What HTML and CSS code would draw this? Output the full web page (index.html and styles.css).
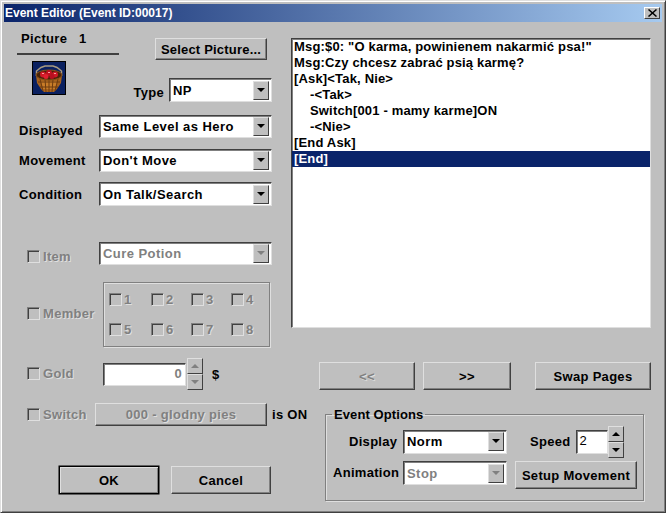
FILE: index.html
```html
<!DOCTYPE html>
<html lang="pl">
<head>
<meta charset="UTF-8" />
<title>Event Editor</title>
<link rel="stylesheet" href="styles.css">
</head>
<body>
  <div class="window">
    <div class="titlebar">
      <span>Event Editor (Event ID:00017)</span>
      <button class="close-btn">
        <svg width="9" height="8" viewBox="0 0 9 8"><path d="M0.500 0.500 8.500 7.500M8.500 0.500 0.500 7.500" stroke="#000" stroke-width="1.500" fill="none"/></svg>
      </button>
    </div>
    <div class="dialog">
      <div class="left-col">
        <div class="top-row">
          <div class="picture-block">
            <div class="picture-title">Picture&nbsp;&nbsp;&nbsp;1</div>
            <svg class="picture-icon" width="34" height="34" viewBox="0 0 34 34">
              <rect width="34" height="34" fill="#000"/>
              <rect x="1" y="1" width="32" height="32" fill="#0a2060"/>
              <path d="M4.500 15V10L9 6.500 13 5H21L25 6.500 29.500 10V15" fill="none" stroke="#a89a80" stroke-width="1.500"/>
              <path d="M4 14H30L29 22 25 28 22 31H12L9 28 5 22Z" fill="#a8621c"/>
              <path d="M9 20H25L23 28H11Z" fill="#c87c28"/>
              <path d="M8 18 11 30M13 18 14 31M17 18V31M21 18 20 31M26 18 23 30M6 21H28M8 26H26" stroke="#6e3c10" stroke-width="1" fill="none"/>
              <ellipse cx="17" cy="14" rx="13" ry="5" fill="#4a2408" stroke="#8a5218"/>
              <circle cx="11" cy="13.500" r="3" fill="#d01828"/>
              <circle cx="17" cy="12" r="3" fill="#c01020"/>
              <circle cx="23" cy="13.500" r="3" fill="#d01828"/>
              <circle cx="14" cy="15.500" r="2.500" fill="#e02030"/>
              <circle cx="20" cy="15.500" r="2.500" fill="#b81020"/>
              <path d="M10 12h2v1h-2zM16 11h2v1h-2zM22 12h2v1h-2z" fill="#f8a0a0"/>
            </svg>
          </div>
          <div class="picture-side">
            <button class="btn select-picture">Select Picture...</button>
            <div class="type-row">
              <span class="label">Type</span>
              <div class="combo combo-type"><span class="combo-text">NP</span><span class="combo-arrow"></span></div>
            </div>
          </div>
        </div>

        <div class="field field-displayed">
          <span class="label field-label">Displayed</span>
          <div class="combo"><span class="combo-text">Same Level as Hero</span><span class="combo-arrow"></span></div>
        </div>
        <div class="field field-movement">
          <span class="label field-label">Movement</span>
          <div class="combo"><span class="combo-text">Don't Move</span><span class="combo-arrow"></span></div>
        </div>
        <div class="field field-condition">
          <span class="label field-label">Condition</span>
          <div class="combo"><span class="combo-text">On Talk/Search</span><span class="combo-arrow"></span></div>
        </div>

        <div class="row-item">
          <label class="check disabled check-item"><input type="checkbox" disabled>Item</label>
          <div class="combo combo-disabled"><span class="combo-text">Cure Potion</span><span class="combo-arrow"></span></div>
        </div>

        <div class="row-member">
          <label class="check disabled check-member"><input type="checkbox" disabled>Member</label>
          <div class="member-box">
            <label class="check disabled"><input type="checkbox" disabled>1</label>
            <label class="check disabled"><input type="checkbox" disabled>2</label>
            <label class="check disabled"><input type="checkbox" disabled>3</label>
            <label class="check disabled"><input type="checkbox" disabled>4</label>
            <label class="check disabled"><input type="checkbox" disabled>5</label>
            <label class="check disabled"><input type="checkbox" disabled>6</label>
            <label class="check disabled"><input type="checkbox" disabled>7</label>
            <label class="check disabled"><input type="checkbox" disabled>8</label>
          </div>
        </div>

        <div class="row-gold">
          <label class="check disabled check-gold"><input type="checkbox" disabled>Gold</label>
          <div class="edit edit-gold disabled-text">0</div>
          <div class="spinner spinner-disabled"><span class="spin spin-up"></span><span class="spin spin-down"></span></div>
          <span class="label dollar">$</span>
        </div>

        <div class="row-switch">
          <label class="check disabled check-switch"><input type="checkbox" disabled>Switch</label>
          <button class="btn switch-btn disabled-text" disabled>000 - glodny pies</button>
          <span class="label is-on">is ON</span>
        </div>

        <div class="row-actions">
          <button class="btn btn-default action-btn">OK</button>
          <button class="btn action-btn">Cancel</button>
        </div>
      </div>

      <div class="right-col">
        <div class="listbox">
          <div class="list-line">Msg:$0: "O karma, powinienem nakarmić psa!"</div>
          <div class="list-line">Msg:Czy chcesz zabrać psią karmę?</div>
          <div class="list-line">[Ask]&lt;Tak, Nie&gt;</div>
          <div class="list-line indent">-&lt;Tak&gt;</div>
          <div class="list-line indent">Switch[001 - mamy karme]ON</div>
          <div class="list-line indent">-&lt;Nie&gt;</div>
          <div class="list-line">[End Ask]</div>
          <div class="list-line selected">[End]</div>
        </div>

        <div class="nav-row">
          <button class="btn nav-prev disabled-text" disabled>&lt;&lt;</button>
          <button class="btn nav-next">&gt;&gt;</button>
          <button class="btn nav-swap">Swap Pages</button>
        </div>

        <fieldset class="options">
          <legend>Event Options</legend>
          <div class="options-row">
            <span class="label opt-label opt-label-display">Display</span>
            <div class="combo combo-small"><span class="combo-text">Norm</span><span class="combo-arrow"></span></div>
            <span class="label speed-label">Speed</span>
            <div class="edit edit-speed">2</div>
            <div class="spinner"><span class="spin spin-up"></span><span class="spin spin-down"></span></div>
          </div>
          <div class="options-row options-row-2">
            <span class="label opt-label">Animation</span>
            <div class="combo combo-small combo-disabled"><span class="combo-text">Stop</span><span class="combo-arrow"></span></div>
            <button class="btn setup-btn">Setup Movement</button>
          </div>
        </fieldset>
      </div>
    </div>
  </div>
</body>
</html>
```

FILE: styles.css
```css
* {
  box-sizing: border-box;
}
html, body {
  margin: 0;
  padding: 0;
  background: #bfbfbf;
}
body {
  font-family: "Liberation Sans", Arial, sans-serif;
  font-size: 13px;
  font-weight: bold;
  letter-spacing: 0.3px;
  color: #000;
}
.window {
  width: 666px;
  height: 513px;
  padding: 3px 3px 0;
  background: #bfbfbf;
  border: 1px solid;
  border-color: #dfdfdf #404040 #404040 #dfdfdf;
  box-shadow: inset 1px 1px 0 #fff, inset -1px -1px 0 #808080;
  overflow: hidden;
}
.titlebar {
  height: 18px;
  display: flex;
  align-items: center;
  justify-content: space-between;
  padding: 0 2px 0 1px;
  color: #fff;
  font-size: 12px;
  letter-spacing: 0;
  background: linear-gradient(to right, #0a246a, #a6caf0);
}
.close-btn {
  width: 16px;
  height: 12px;
  padding: 0;
  display: flex;
  align-items: center;
  justify-content: center;
  background: #bfbfbf;
  border: 1px solid;
  border-color: #fff #404040 #404040 #fff;
}
.dialog {
  display: flex;
}
.left-col {
  width: 287px;
  flex: none;
  padding-top: 8px;
}
.right-col {
  flex: none;
  width: 366px;
  padding-top: 16px;
}
.label {
  white-space: nowrap;
}

/* buttons */
.btn {
  font: inherit;
  letter-spacing: inherit;
  color: #000;
  padding: 0;
  background: #bfbfbf;
  border: 1px solid;
  border-color: #dfdfdf #404040 #404040 #dfdfdf;
  box-shadow: inset -1px -1px 0 #808080;
}
.btn-default {
  border-color: #000;
  box-shadow: inset 1px 1px 0 #dfdfdf, inset -1px -1px 0 #808080, 0 0 0 0.5px #000;
}
.disabled-text,
.disabled {
  color: #808080;
  text-shadow: 1px 1px 0 #dfdfdf;
}

/* combo boxes */
.combo {
  display: flex;
  align-items: center;
  justify-content: space-between;
  flex: none;
  width: 173px;
  height: 23px;
  background: #fff;
  border: 1px solid;
  border-color: #404040 #dfdfdf #dfdfdf #404040;
  box-shadow: inset 1px 1px 0 #808080;
  padding: 1px 1px 1px 3px;
  letter-spacing: 0.45px;
}
.combo-arrow {
  position: relative;
  flex: none;
  width: 16px;
  height: 19px;
  margin-right: 1px;
  background: #bfbfbf;
  border: 1px solid;
  border-color: #dfdfdf #404040 #404040 #dfdfdf;
}
.combo-arrow::after {
  content: "";
  position: absolute;
  left: 3px;
  top: 6px;
  border-left: 4px solid transparent;
  border-right: 4px solid transparent;
  border-top: 4px solid #000;
}
.combo-disabled .combo-text {
  color: #808080;
}
.combo-disabled .combo-arrow::after {
  border-top-color: #808080;
}

/* checks */
.check {
  display: flex;
  align-items: center;
  gap: 3px;
  white-space: nowrap;
}
.check input {
  appearance: none;
  width: 13px;
  height: 13px;
  margin: 0;
  flex: none;
  background: #bfbfbf;
  border: 1px solid;
  border-color: #808080 #dfdfdf #dfdfdf #808080;
  box-shadow: inset 1px 1px 0 #404040;
}

/* top left */
.top-row {
  display: flex;
  height: 72px;
  margin-left: 13px;
}
.picture-block {
  width: 102px;
}
.picture-title {
  height: 25px;
  padding: 1px 0 0 4px;
  border-bottom: 2px solid #404040;
}
.picture-icon {
  display: block;
  width: 34px;
  height: 34px;
  margin: 6px 0 0 15px;
}
.picture-side {
  width: 153px;
  display: flex;
  flex-direction: column;
  align-items: flex-end;
}
.select-picture {
  width: 112px;
  height: 22px;
  margin: 8px 5px 0 0;
  letter-spacing: 0.2px;
}
.type-row {
  display: flex;
  align-items: center;
  margin-top: 18px;
}
.type-row .label {
  margin: 5px 5px 0 0;
}
.combo-type {
  width: 103px;
  height: 24px;
}

/* left fields */
.field {
  display: flex;
  align-items: center;
  margin: 0 0 0 15px;
}
.field-label {
  width: 80px;
}
.field-displayed {
  margin-top: 13px;
}
.field-displayed .field-label {
  margin-top: 8px;
}
.field-movement {
  margin-top: 11px;
}
.field-condition {
  margin-top: 10px;
}
.field-condition .combo {
  height: 24px;
}
.row-item {
  display: flex;
  align-items: center;
  margin: 36px 0 0 23px;
}
.check-item {
  width: 72px;
  margin-top: 6px;
}
.row-member {
  display: flex;
  align-items: center;
  margin: 17px 0 0 23px;
}
.check-member {
  width: 76px;
  margin-bottom: 2px;
}
.member-box {
  width: 167px;
  height: 65px;
  display: grid;
  grid-template-columns: 42px 40px 40px 1fr;
  grid-auto-rows: 30px;
  padding: 10px 0 0 5px;
  border: 1px solid #808080;
  box-shadow: inset 1px 1px 0 #dfdfdf, 1px 1px 0 #dfdfdf;
}
.member-box .check {
  height: 13px;
  gap: 2px;
}
.row-gold {
  display: flex;
  align-items: center;
  height: 32px;
  margin: 11px 0 0 23px;
}
.check-gold {
  width: 76px;
  margin-bottom: 2px;
}
.edit {
  background: #fff;
  border: 1px solid;
  border-color: #404040 #dfdfdf #dfdfdf #404040;
  box-shadow: inset 1px 1px 0 #808080;
}
.edit-gold {
  width: 83px;
  height: 23px;
  padding: 2px 3px 0 0;
  text-align: right;
  text-shadow: none;
}
.spinner {
  display: flex;
  flex-direction: column;
  width: 16px;
  margin-left: 1px;
}
.spin {
  position: relative;
  height: 16px;
  background: #bfbfbf;
  border: 1px solid;
  border-color: #dfdfdf #404040 #404040 #dfdfdf;
}
.spin::after {
  content: "";
  position: absolute;
  left: 3px;
  top: 5px;
  border-left: 4px solid transparent;
  border-right: 4px solid transparent;
}
.spin-up::after {
  border-bottom: 4px solid #000;
}
.spin-down::after {
  border-top: 4px solid #000;
}
.spinner-disabled .spin-up::after {
  border-bottom-color: #808080;
}
.spinner-disabled .spin-down::after {
  border-top-color: #808080;
}
.dollar {
  margin-left: 9px;
}
.row-switch {
  display: flex;
  align-items: center;
  height: 23px;
  margin: 13px 0 0 23px;
}
.check-switch {
  flex: none;
  width: 68px;
}
.switch-btn {
  flex: none;
  width: 172px;
  height: 23px;
}
.is-on {
  margin-left: 5px;
}
.row-actions {
  display: flex;
  gap: 12px;
  margin: 40px 0 0 55px;
}
.action-btn {
  width: 100px;
  height: 28px;
}

/* right side */
.listbox {
  width: 360px;
  height: 290px;
  background: #fff;
  border: 1px solid;
  border-color: #404040 #dfdfdf #dfdfdf #404040;
  box-shadow: inset 1px 1px 0 #808080;
  letter-spacing: 0.17px;
}
.list-line {
  height: 16px;
  line-height: 16px;
  padding-left: 2px;
  white-space: nowrap;
}
.indent {
  padding-left: 18px;
}
.selected {
  background: #0a246a;
  color: #fff;
}
.nav-row {
  display: flex;
  margin: 34px 0 0 28px;
}
.nav-row .btn {
  height: 28px;
}
.nav-prev {
  width: 96px;
}
.nav-next {
  width: 88px;
  margin-left: 8px;
}
.nav-swap {
  width: 116px;
  margin-left: 24px;
}
.options {
  width: 319px;
  height: 94px;
  margin: 17px 0 0 34px;
  padding: 4px 0 0 7px;
  border: 1px solid #808080;
  box-shadow: inset 1px 1px 0 #dfdfdf, 1px 1px 0 #dfdfdf;
}
.options legend {
  padding: 0 2px;
  margin-left: -1px;
  letter-spacing: 0.1px;
}
.options-row {
  display: flex;
  align-items: center;
  height: 31px;
}
.options-row-2 {
  align-items: flex-start;
  height: 28px;
  margin-top: 4px;
}
.opt-label {
  width: 70px;
  line-height: 24px;
}
.opt-label-display {
  padding-left: 16px;
}
.combo-small {
  width: 104px;
  height: 24px;
}
.speed-label {
  margin-left: 23px;
}
.edit-speed {
  width: 32px;
  height: 24px;
  margin-left: 5px;
  padding: 2px 0 0 3px;
  font-weight: normal;
}
.options .spinner {
  margin-left: 0;
}
.setup-btn {
  width: 122px;
  height: 28px;
  margin-left: 8px;
}
```
